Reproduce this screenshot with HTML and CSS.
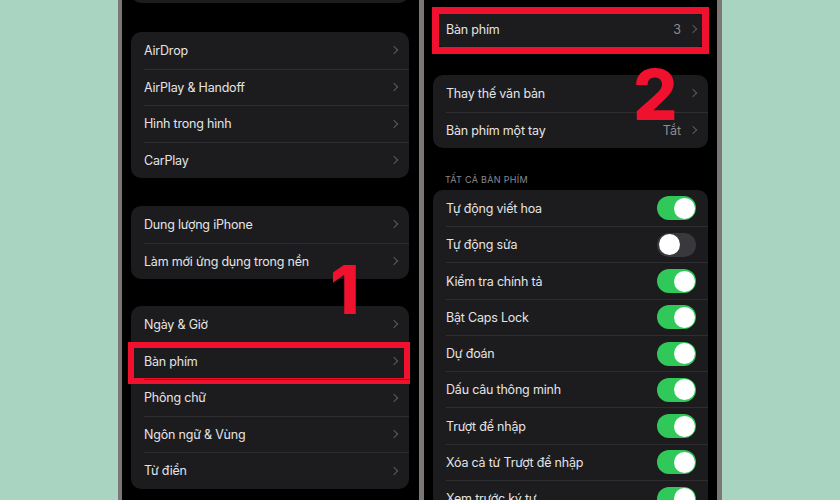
FILE: index.html
```html
<!DOCTYPE html>
<html lang="vi">

<head>
  <meta charset="UTF-8" />
  <meta name="viewport" content="width=device-width, initial-scale=1.0" />
  <title>Cài đặt bàn phím</title>
  <link rel="stylesheet" href="styles.css">
</head>

<body>

  <main class="stage">

    <section class="phone phone-left">
      <div class="card card-top"></div>

      <div class="card">
        <div class="row"><div class="row-in"><span class="label">AirDrop</span><span class="chev"></span></div></div>
        <div class="row"><div class="row-in"><span class="label">AirPlay &amp; Handoff</span><span class="chev"></span></div></div>
        <div class="row"><div class="row-in"><span class="label">Hình trong hình</span><span class="chev"></span></div></div>
        <div class="row"><div class="row-in"><span class="label">CarPlay</span><span class="chev"></span></div></div>
      </div>

      <div class="card card-mid">
        <div class="row"><div class="row-in"><span class="label">Dung lượng iPhone</span><span class="chev"></span></div></div>
        <div class="row"><div class="row-in"><span class="label">Làm mới ứng dụng trong nền</span><span class="chev"></span></div></div>
      </div>

      <div class="card card-last">
        <div class="row"><div class="row-in"><span class="label">Ngày &amp; Giờ</span><span class="chev"></span></div></div>
        <div class="row marked"><div class="row-in"><span class="label">Bàn phím</span><span class="chev"></span></div><div class="mark mark-left"></div></div>
        <div class="row"><div class="row-in"><span class="label">Phông chữ</span><span class="chev"></span></div></div>
        <div class="row"><div class="row-in"><span class="label">Ngôn ngữ &amp; Vùng</span><span class="chev"></span></div></div>
        <div class="row"><div class="row-in"><span class="label">Từ điển</span><span class="chev"></span></div></div>
      </div>

      <div class="step step-1">1</div>
    </section>

    <section class="phone phone-right">
      <div class="card card-first">
        <div class="row marked"><div class="row-in"><span class="label">Bàn phím</span><span class="value">3</span><span class="chev"></span></div><div class="mark mark-right"></div></div>
      </div>

      <div class="card">
        <div class="row"><div class="row-in"><span class="label">Thay thế văn bản</span><span class="chev"></span></div></div>
        <div class="row"><div class="row-in"><span class="label">Bàn phím một tay</span><span class="value">Tắt</span><span class="chev"></span></div></div>
      </div>

      <div class="group-title">TẤT CẢ BÀN PHÍM</div>

      <div class="card card-toggles">
        <div class="row"><div class="row-in"><span class="label">Tự động viết hoa</span><span class="switch on"></span></div></div>
        <div class="row"><div class="row-in"><span class="label">Tự động sửa</span><span class="switch"></span></div></div>
        <div class="row"><div class="row-in"><span class="label">Kiểm tra chính tả</span><span class="switch on"></span></div></div>
        <div class="row"><div class="row-in"><span class="label">Bật Caps Lock</span><span class="switch on"></span></div></div>
        <div class="row"><div class="row-in"><span class="label">Dự đoán</span><span class="switch on"></span></div></div>
        <div class="row"><div class="row-in"><span class="label">Dấu câu thông minh</span><span class="switch on"></span></div></div>
        <div class="row"><div class="row-in"><span class="label">Trượt để nhập</span><span class="switch on"></span></div></div>
        <div class="row"><div class="row-in"><span class="label">Xóa cả từ Trượt để nhập</span><span class="switch on"></span></div></div>
        <div class="row"><div class="row-in"><span class="label">Xem trước ký tự</span><span class="switch on"></span></div></div>
      </div>

      <div class="step step-2">2</div>
    </section>

  </main>

</body>

</html>
```

FILE: styles.css
```css
* {
    box-sizing: border-box;
}
html {
    margin: 0;
    padding: 0;
}
body {
    margin: 0;
    padding: 0;
    width: 840px;
    height: 500px;
    overflow: hidden;
    background: #a9d4c2;
    font-family: "Inter", "Noto Sans", sans-serif;
}
.stage {
    display: flex;
    justify-content: center;
    height: 500px;
}
.phone {
    position: relative;
    height: 500px;
    background: #000;
    border-style: solid;
    border-color: #7c7674;
    border-width: 0;
    overflow: hidden;
}
.phone-left {
    width: 303px;
    padding: 0 10px 0 9px;
    border-left-width: 4px;
    border-right-width: 2px;
}
.phone-right {
    width: 301px;
    padding: 0 9px 0 9px;
    border-left-width: 3px;
    border-right-width: 5px;
}
.card {
    position: relative;
    background: #1c1c1e;
    border-radius: 10px;
    margin-top: 28px;
}
.card-top {
    height: 40px;
    margin-top: -37px;
}
.phone-left .card {
    margin-top: 29px;
}
.phone-left .card-top {
    margin-top: -37px;
}
.phone-left .card-mid {
    margin-top: 28px;
}
.phone-left .card-last {
    margin-top: 27px;
}
.card-first {
    margin-top: 11px;
}
.row {
    position: relative;
    padding-left: 13px;
}
.row-in {
    display: flex;
    align-items: center;
    height: 36.3px;
    padding-right: 10px;
    border-top: 1px solid #2e2e31;
}
.phone-left .row-in {
    height: 36.5px;
}
.row:first-child .row-in {
    border-top: 0;
}
.card-toggles .row-in {
    height: 36.25px;
    padding-right: 12px;
}
.label {
    flex: 1;
    min-width: 0;
    color: #e4e4e6;
    font-size: 12.5px;
    letter-spacing: -0.2px;
    white-space: nowrap;
}
.value {
    color: #8e8e93;
    font-size: 12.5px;
    margin-right: 9px;
}
.chev {
    width: 6px;
    height: 6px;
    margin-right: 2px;
    border-top: 1.5px solid #5c5c60;
    border-right: 1.5px solid #5c5c60;
    transform: rotate(45deg);
}
.switch {
    position: relative;
    width: 39px;
    height: 24px;
    border-radius: 12px;
    background: #39393d;
}
.switch::after {
    content: "";
    position: absolute;
    top: 1.5px;
    left: 1.5px;
    width: 21px;
    height: 21px;
    border-radius: 50%;
    background: #fff;
}
.switch.on {
    background: #31c85a;
}
.switch.on::after {
    left: 16.5px;
}
.group-title {
    margin: 0;
    padding: 26px 0 5px 12px;
    color: #8a8a8f;
    font-size: 9px;
    letter-spacing: 0.3px;
}
.card-toggles {
    margin-top: 0;
}
.mark {
    position: absolute;
    border: 6.5px solid #f0112f;
    pointer-events: none;
}
.mark-left {
    top: -0.5px;
    bottom: -4.5px;
    left: -3px;
    right: -1px;
}
.mark-right {
    top: -4px;
    bottom: -7px;
    left: -1px;
    right: -1px;
    border-width: 7px;
}
.step {
    position: absolute;
    color: #f0112f;
    font-weight: 800;
    line-height: 0.75;
}
.step-1 {
    top: 265px;
    left: 208px;
    font-size: 67px;
}
.step-2 {
    top: 69px;
    left: 209px;
    font-size: 70px;
}
```
